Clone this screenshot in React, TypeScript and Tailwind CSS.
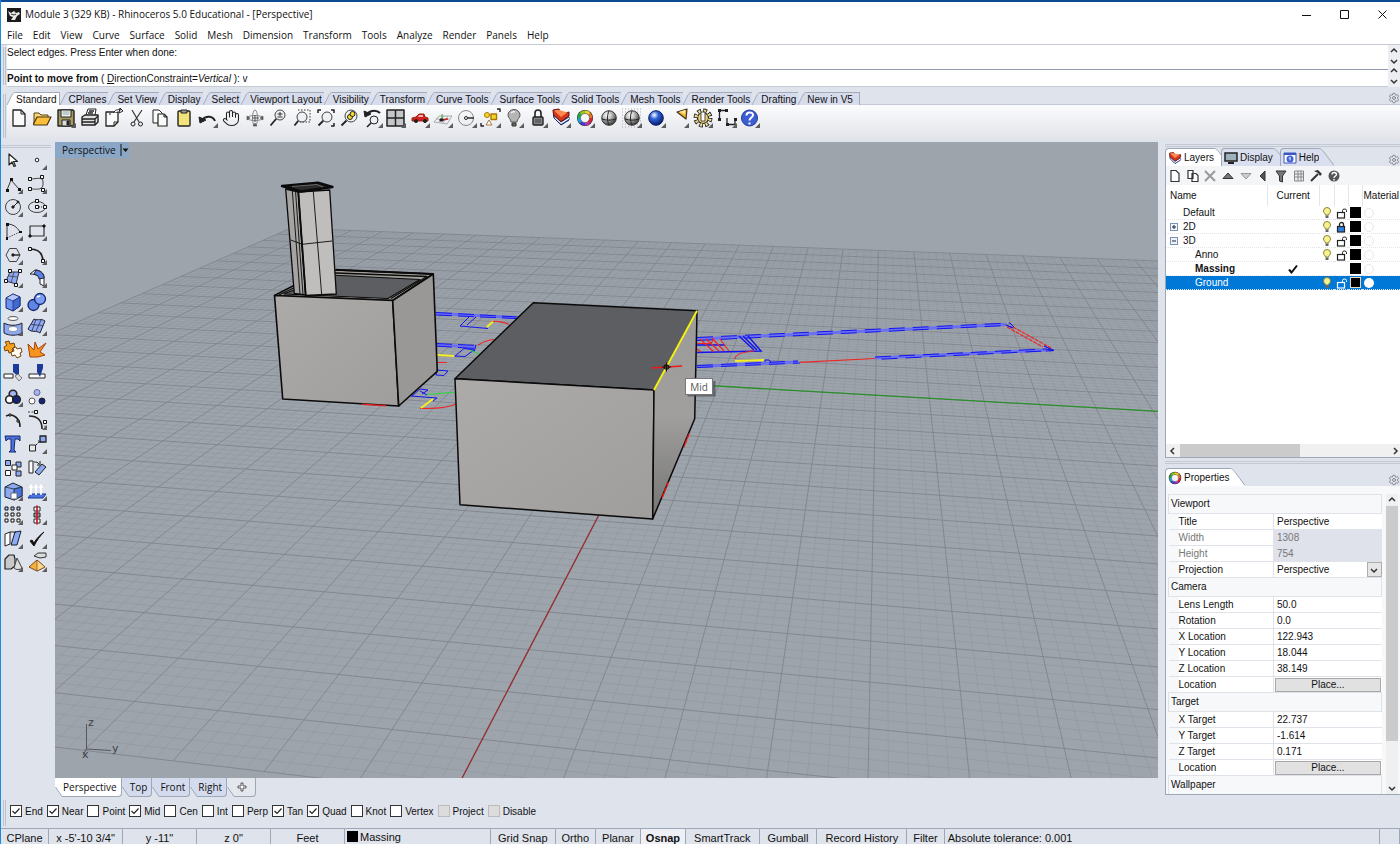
import { useState, type ReactNode } from 'react';
import { Hand, Settings } from 'lucide-react';

/* ---------- camera and construction-plane grid ---------- */

type P2 = [number, number];
const CAM = [122.943, 18.044, 38.149];
const TGT = [22.737, -1.614, 0.171];
const FOCAL = 1325;

function makeProjector() {
  const d = CAM.map((c, i) => TGT[i] - c);
  const len = Math.hypot(d[0], d[1], d[2]);
  const f = d.map((v) => v / len);
  const n = Math.hypot(f[0], f[1]);
  const r = [f[1] / n, -f[0] / n, 0];
  const u = [r[1] * f[2], -r[0] * f[2], r[0] * f[1] - r[1] * f[0]];
  return (x: number, y: number): P2 => {
    const v = [x - CAM[0], y - CAM[1], -CAM[2]];
    const dot = (a: number[]) => a[0] * v[0] + a[1] * v[1] + a[2] * v[2];
    const k = FOCAL / dot(f);
    return [606.5 + dot(r) * k, 460 - dot(u) * k];
  };
}
const project = makeProjector();
const seg = (a: P2, b: P2) =>
  `M${a[0].toFixed(1)} ${a[1].toFixed(1)}L${b[0].toFixed(1)} ${b[1].toFixed(1)}`;

let minorPath = '';
let majorPath = '';
for (let i = -70; i <= 70; i++) {
  const lines = seg(project(i, -70), project(i, 70)) + seg(project(-70, i), project(70, i));
  if (i % 5 === 0) majorPath += lines;
  else minorPath += lines;
}

function Scene() {
  return (
    <svg viewBox="55 142 1103 636" preserveAspectRatio="xMidYMid slice" className="absolute inset-0 h-full w-full" fill="none">
      <defs>
        <linearGradient id="front" x1="0" y1="0" x2="1" y2="1">
          <stop offset="0" stopColor="#acaba9" />
          <stop offset="1" stopColor="#9f9e9c" />
        </linearGradient>
        <linearGradient id="side" x1="0" y1="0" x2="0" y2="1">
          <stop offset="0" stopColor="#9b9b9a" />
          <stop offset="0.5" stopColor="#a09f9e" />
          <stop offset="1" stopColor="#747473" />
        </linearGradient>
      </defs>
      <rect x="55" y="142" width="1103" height="636" fill="#9da4ac" />
      <path d={minorPath} stroke="#8b9199" strokeWidth="1" opacity="0.42" />
      <path d={majorPath} stroke="#80838b" strokeWidth="1" opacity="0.85" />
      <path d={seg(project(0, 0), project(0, 70))} stroke="#2b8f2b" strokeWidth="1.3" />
      <path d={seg(project(0, 0), project(70, 0))} stroke="#962f31" strokeWidth="1.3" />

      {/* floor plan curves */}
      <g stroke="#6a70ee" strokeWidth="3">
        <path d="M697 339L762 336L1006 324.500M697 366.500L798 362M875 358L1047 350" />
        <path d="M436 313.500L516 317.500M436 345L476 347" />
      </g>
      <g stroke="#1414ee" strokeWidth="1">
        <path d="M697 337.500L740 335.500L1010 323L1014 327M697 340.500L1006 325.500M697 365.500L798 361M697 367.500L800 363M875 357L1045 349L1054 350.500L875 359.500M1044 346L1054 350.500M1006 325L1012 328" strokeDasharray="16 8" />
        <path d="M436 312.500L518 317M436 315L516 318.500M436 343.500L478 345.500M436 346L474 348.500" strokeDasharray="16 6" />
        <path d="M1006 325L1014 328M1044 346L1054 350.500L1046 351" />
        <path d="M739 336L754 350M743 336L757 350M748 336L761 351L697 352.500M697 345H725" strokeWidth="1.500" />
        <path d="M765 362v-2h4l2 2M470 316L460 326L488 328.500M476 317L467 325M455 356L464 348.500L474 350L465 356.500zM476 345L474 352M437 370L448 371L444 375.500L436 375zM412 396L420 389L428 390L422 394M411 396L437 398L433 401M420 391L427 395" />
      </g>
      <g stroke="#f02525" strokeWidth="1.200">
        <path d="M800 362.300L875 358.500" />
        <path d="M1007 327L1043 347M1013 327L1051 348" strokeDasharray="4 1" />
        <path d="M697 343.500h14l3-5M700 339l14 13M706 339l13 12M712 338l12 13M720 339l9 12M697 349l4 3M754 351c-12 1-19 3-19 8M491 321.500c6-1 14 1 18 3M478 345c5-3 10-5 16-5.500M437 362.500h10M420 408.500c12 0 27 0 37-5" />
      </g>
      <g stroke="#f4ee22" strokeWidth="2">
        <path d="M735 361L764 360M487 327L493 321.500M437 355L454 356M421 408L433 399" />
      </g>
      <path d="M470 350L479 354M427 394.500L458 392" stroke="#22dd33" />

      {/* small building */}
      <g stroke="#0a0a0a" strokeWidth="1.600" strokeLinejoin="round">
        <path d="M274.500 295.500L322 271L336 270L433.300 274L392.700 300.500z" fill="#a19f9a" />
        <path d="M284 294L330 275L420 279.500L388 298.500z" fill="#5d5e62" strokeWidth="1.200" />
        <path d="M279 295L325 273L336 273L427 276.500L391 298.500" strokeWidth="1.300" />
        <path d="M336 269.700L433.300 274" strokeWidth="2" />
        <path d="M274.500 295.500L392.700 300.500L398.700 406L282.700 399z" fill="url(#front)" />
        <path d="M392.700 300.500L433.300 274L437.300 371.300L398.700 406z" fill="#999897" />
      </g>
      <path d="M362 404.300L386 405.700" stroke="#d22" strokeWidth="1.500" />

      {/* tower */}
      <g stroke="#0a0a0a" strokeLinejoin="round">
        <path d="M285.700 189L298.300 192L305.700 295L294.300 293.500z" fill="#a6a4a3" strokeWidth="1.300" />
        <path d="M298.300 192L329.700 190L336.300 294L305.700 295.500z" fill="#bfbebc" strokeWidth="1.300" />
        <path d="M313.300 191.500L321.700 295M292.300 190.500L300 294.500M295.500 191L303 295" strokeWidth="0.900" />
        <path d="M290.700 240L302.300 244.300L332 241" strokeWidth="0.900" />
        <path d="M298.300 192L305.700 295" strokeWidth="1.800" />
        <path d="M282 186L318 182.700L332.500 187L301 191.500z" fill="#2b2b2d" strokeWidth="2.500" />
        <path d="M292 186.500L317 184.500L323 187" stroke="#777" strokeWidth="0.800" />
      </g>

      {/* large block */}
      <g stroke="#0a0a0a" strokeWidth="1.500" strokeLinejoin="round">
        <path d="M455 378.700L533.300 302.700L697 310.700L654 390z" fill="#5d5e62" />
        <path d="M455 378.700L654 390L652.700 519L460 504.700z" fill="url(#front)" />
        <path d="M654 390L697 310.700L694.700 418.700L652.700 519z" fill="url(#side)" />
      </g>
      <path d="M654 390L697 310.700" stroke="#f7f31a" strokeWidth="2" />
      <path d="M651.700 368L682 366" stroke="#f01818" strokeWidth="1.500" />
      <path d="M689 434L684 447M668.500 482L662 498" stroke="#f01818" strokeWidth="1.500" strokeDasharray="5 1" />
      <circle cx="666.500" cy="367" r="2.200" stroke="#111" strokeWidth="1.200" />
      <path d="M662 367h9M666.500 362.500v9" stroke="#111" />

      {/* snap tooltip */}
      <rect x="687.500" y="381" width="28" height="15.500" fill="#4b4f55" opacity="0.7" />
      <rect x="685.500" y="378.500" width="27" height="16" fill="#fff" stroke="#777" />
      <text x="699" y="390.500" textAnchor="middle" fontSize="10" fill="#575757" className="font-['Open_Sans',sans-serif]">Mid</text>

      {/* world axis icon */}
      <path d="M86.500 724V749L111 750.500M86.500 749L83 755" stroke="#55585d" />
      <g fontSize="11" fill="#3e4146" className="font-['DejaVu_Sans',sans-serif]">
        <text x="88" y="726">z</text>
        <text x="112" y="752">y</text>
        <text x="82" y="758">x</text>
      </g>
    </svg>
  );
}

/* ---------- icons ---------- */

function Icon({ children, more }: { children: ReactNode; more?: boolean }) {
  return (
    <svg viewBox="0 0 24 24" className="h-6 w-6 shrink-0" fill="none" stroke="#222" strokeWidth="1" strokeLinejoin="round">
      {children}
      {more && <path d="M22 17v5h-5z" fill="#5d5d60" stroke="none" />}
    </svg>
  );
}

const Lens = ({ x = 14, y = 9, r = 5 }: { x?: number; y?: number; r?: number }) => (
  <>
    <circle cx={x} cy={y} r={r} fill="#eef0f3" stroke="#444" />
    <path d={`M${x - r * 0.75} ${y + r * 0.75}L4.500 19.500`} stroke="#222" strokeWidth="1.800" />
  </>
);

function Wheel({ cx = 12, cy = 12, r = 6 }: { cx?: number; cy?: number; r?: number }) {
  const colors = ['#f0d020', '#e87020', '#dd2030', '#c030b0', '#4040d8', '#20a0d8', '#20b040', '#90cc20'];
  return (
    <>
      <circle cx={cx} cy={cy} r={r + 2} fill="#222" stroke="none" />
      {colors.map((c, i) => {
        const a = (i * Math.PI) / 4 - Math.PI / 2;
        const b = a + Math.PI / 4 + 0.05;
        return (
          <path
            key={c}
            d={`M${cx + r * Math.cos(a)} ${cy + r * Math.sin(a)}A${r} ${r} 0 0 1 ${cx + r * Math.cos(b)} ${cy + r * Math.sin(b)}`}
            stroke={c}
            strokeWidth="3"
          />
        );
      })}
      <circle cx={cx} cy={cy} r={r - 1.5} fill="#f6f6f8" stroke="#555" strokeWidth="0.500" />
    </>
  );
}

const LayerGlyph = () => (
  <>
    <path d="M5 12L12 19L20 14V11L12 16L4.500 9z" fill="#2a48b0" stroke="#122560" />
    <path d="M5 10L12 16.500L20 11.500V13L12 18L6 12.500z" fill="#fff" stroke="none" />
    <path d="M4 4L10 3L12 8L20 6V10L12 15.500L4.500 9z" fill="#d8361a" stroke="#5a120c" />
    <path d="M5 4.500L9.500 3.800L18.500 6.500L12 11z" fill="#fb8a52" stroke="none" />
  </>
);

const Ball = ({ id, light, dark }: { id: string; light: string; dark: string }) => (
  <>
    <defs>
      <radialGradient id={id} cx="0.38" cy="0.3" r="0.7">
        <stop offset="0" stopColor="#fff" />
        <stop offset="0.4" stopColor={light} />
        <stop offset="1" stopColor={dark} />
      </radialGradient>
    </defs>
    <circle cx="12" cy="12" r="7.300" fill={`url(#${id})`} stroke={dark} />
  </>
);

const PAGE = 'M6 4h8l4 4v12H6z';

const toolbar: { name: string; more?: boolean; art: ReactNode }[] = [
  { name: 'New', art: <><path d={PAGE} fill="#fafafa" strokeWidth="1.300" /><path d="M14 4v4h4" /></> },
  { name: 'Open', art: <><path d="M4 18V7h5l2 2h7v3" fill="#f5d67a" stroke="#5a4010" /><path d="M3.500 18L7 11h14l-4 8H4z" fill="#fbbf3c" stroke="#4a350c" strokeWidth="1.200" /></> },
  { name: 'Save', more: true, art: <><path d="M4 4h15l1 1v15H4z" fill="#a39a5c" strokeWidth="1.400" /><path d="M7 4h10v7H7z" fill="#f1f1f1" /><path d="M8 14h8v6H8z" fill="#ddd" /><path d="M13 15h2v4h-2z" fill="#222" /><path d="M8.500 6h7M8.500 8h7" stroke="#8aa" /></> },
  { name: 'Print', art: <><path d="M8 9l2-6h8l-1 6" fill="#fff" /><path d="M4 11l3-2h13v7l-3 3H4z" fill="#e2e2e2" strokeWidth="1.400" /><path d="M4 13h13l3-3M4 16h13M17 13v6M11 5h5M10 7h5" strokeWidth="1.300" /></> },
  { name: 'Document properties', art: <><path d="M5 6h12v10l-4 4H5z" fill="#fafafa" strokeWidth="1.300" /><path d="M13 20v-4h4M8 8h2" /><path d="M13 7c0-3 4-4 7-3M19 2l3 3l-4 2z" fill="#fff" /></> },
  { name: 'Cut', art: <><path d="M7 4l7 12M17 4L9 16" stroke="#333" strokeWidth="1.200" /><circle cx="8" cy="18" r="2" /><circle cx="15.500" cy="18" r="2" /></> },
  { name: 'Copy', art: <><path d="M5 4h6l3 3v10H5z" fill="#fafafa" /><path d="M10 8h6l3 3v9h-9z" fill="#fafafa" strokeWidth="1.200" /><path d="M16 8v3h3" /></> },
  { name: 'Paste', art: <><rect x="6" y="5" width="12" height="15" rx="1" fill="#f3e37b" strokeWidth="1.400" /><path d="M9 4h6v3H9z" fill="#999" /></> },
  { name: 'Undo', more: true, art: <><path d="M6 14c4-5 11-4 13 1" stroke="#222" strokeWidth="2" /><path d="M3 11l1 6l6-3z" fill="#222" /></> },
  { name: 'Pan', art: <Hand x="3" y="3" size={18} strokeWidth={1.4} stroke="#222" /> },
  { name: 'Rotate view', art: <><ellipse cx="12" cy="12" rx="8" ry="2.500" stroke="#888" /><ellipse cx="12" cy="12" rx="2.500" ry="8" stroke="#888" /><path d="M12 9v7M9 12h7" stroke="#555" /><path d="M10 20l2-3l2 3zM4 10l3 2l-3 2zM20 10l-3 2l3 2z" fill="#666" stroke="#444" strokeWidth="0.500" /></> },
  { name: 'Zoom dynamic', art: <><Lens /><path d="M11.500 8h5M14 6v4M11.500 11h5" stroke="#333" /></> },
  { name: 'Zoom window', art: <><path d="M8 4h12v12H10" stroke="#333" strokeDasharray="1.500 1.500" /><Lens x={12} y={11} /></> },
  { name: 'Zoom extents', art: <><Lens x={13} y={11} /><path d="M4 7V4h3M17 4h3v3M20 17v3h-3" strokeWidth="1.500" /></> },
  { name: 'Zoom selected', art: <><Lens r={6} y={10} /><circle cx="13" cy="11" r="2.500" fill="#f4dd26" /><circle cx="15.500" cy="8" r="2.500" fill="#f4dd26" /></> },
  { name: 'Undo view', more: true, art: <><circle cx="13" cy="14" r="4" fill="#eef0f3" /><path d="M10 17l-4 4" strokeWidth="1.600" /><path d="M7 7c4-3 9-3 12 0" strokeWidth="2.200" /><path d="M3 5l1 6l6-3z" fill="#222" /></> },
  { name: 'Four viewports', more: true, art: <><rect x="3" y="4" width="17" height="16" fill="#c4c6c8" strokeWidth="1.500" /><path d="M11.500 4v16M3 12h17" strokeWidth="1.500" /></> },
  { name: 'Named view', more: true, art: <><path d="M4 12l4-1l3-3h5l1 3l3 1v3H4z" fill="#d41f1f" stroke="#921" /><circle cx="8" cy="15" r="1.600" fill="#222" /><circle cx="17" cy="15" r="1.600" fill="#222" /><path d="M11 9h4v2h-5z" fill="#f3b0b0" stroke="none" /></> },
  { name: 'Set CPlane', more: true, art: <><path d="M3 16l5-6h13l-5 8zM8 16l5-6M12 17l5-7M5 13h13" stroke="#999" strokeWidth="0.800" /><path d="M11 14V8" stroke="#2a2" /><path d="M11 14l6-1" stroke="#c22" strokeWidth="1.500" /><path d="M9 13h3v2H9z" fill="#222" /></> },
  { name: 'Object snap', more: true, art: <><circle cx="11" cy="12" r="7.500" stroke="#888" /><path d="M11 12h8" strokeWidth="1.400" /><circle cx="11" cy="12" r="1.500" fill="#fff" /></> },
  { name: 'Select', more: true, art: <><circle cx="8" cy="9" r="2.500" fill="#f6d62a" stroke="#a70" /><rect x="12" y="8" width="5.500" height="5.500" fill="#f6d62a" stroke="#a70" strokeWidth="1.400" /><path d="M10 14l3 5H7z" fill="#fff" stroke="#a74" /><path d="M18 3h3v3M5 20H2v-3" strokeWidth="1.400" /></> },
  { name: 'Hide', more: true, art: <><path d="M9 16c0-3-3-4-3-7a6 5.500 0 0 1 12 0c0 3-3 4-3 7z" fill="#b5b5b5" stroke="#555" /><path d="M10 17h4v3h-4z" fill="#666" stroke="#333" /><path d="M9 7c1-1 2-2 4-1" stroke="#eee" strokeWidth="1.500" /></> },
  { name: 'Lock', more: true, art: <><path d="M9 11V7a3 3 0 0 1 6 0v4" strokeWidth="1.600" /><rect x="7" y="11" width="10" height="8" rx="1" fill="#888" strokeWidth="1.400" /><path d="M9 14h6M9 16h6" stroke="#444" /></> },
  { name: 'Layers', more: true, art: <LayerGlyph /> },
  { name: 'Object properties', more: true, art: <Wheel /> },
  { name: 'Shade', art: <><Ball id="b1" light="#c4c4c4" dark="#3a3a3a" /><path d="M5 13c4 1.500 10 1.500 14 0M12 5c-2 4-2 10 0 14" /></> },
  { name: 'Shade selected', more: true, art: <><path d="M2 3h20M2 6h20M2 9h20M2 12h20M2 15h20M2 18h20M2 21h20" stroke="#aaa" strokeDasharray="1 2" /><Ball id="b2" light="#c4c4c4" dark="#3a3a3a" /><path d="M5 13c4 1.500 10 1.500 14 0M12 5c-2 4-2 10 0 14" /></> },
  { name: 'Render', more: true, art: <Ball id="b3" light="#2d63d8" dark="#0b1d6a" /> },
  { name: 'Spotlight', more: true, art: <><path d="M10 6l10-3l-1 10z" fill="#f6b82c" stroke="#432" strokeWidth="1.200" /><path d="M12 6l6-2v4z" fill="#fde59a" stroke="none" /></> },
  { name: 'Options', more: true, art: <><circle cx="12" cy="12" r="7" stroke="#222" strokeWidth="5" strokeDasharray="3.500 2" /><circle cx="12" cy="12" r="5.500" fill="#ecd27a" stroke="#222" strokeWidth="1.200" /><circle cx="12" cy="12" r="7" stroke="#f0dc90" strokeWidth="3.200" strokeDasharray="2 3.500" strokeDashoffset="-0.750" /><path d="M10 6h4v9h-4z" fill="#fff" strokeWidth="0.800" /></> },
  { name: 'Dimension', more: true, art: <><path d="M4.500 5v9M4 4.500h7M12 18.500h8M20 13v6M12 12v7" strokeWidth="1.300" /><path d="M3 3h3v3H3zM10 3h3v3h-3zM3 12h3v3H3zM19 12h3v3h-3zM11 17h3v3h-3z" fill="#222" stroke="none" /></> },
  { name: 'Help', more: true, art: <><circle cx="11.500" cy="12" r="8" fill="#3c5ed2" stroke="#243a9c" /><path d="M8.500 9.500c0-4 6.500-4 6.500-.5c0 2.500-3.500 2.500-3.500 5.500M11.500 16.500v2" stroke="#fff" strokeWidth="2" /></> },
];

const Sq = ({ x, y, s = 3, fill = '#fff' }: { x: number; y: number; s?: number; fill?: string }) => (
  <rect x={x - s / 2} y={y - s / 2} width={s} height={s} fill={fill} stroke="#111" />
);
const BLUE = '#8ea8f2';

const sideTools: { name: string; more?: boolean; art: ReactNode }[] = [
  { name: 'Cancel', art: <path d="M8 6v11l3-3l2 4.500l1.500-.5l-2-4.500h4z" fill="#fff" strokeWidth="1.200" /> },
  { name: 'Point', more: true, art: <circle cx="12" cy="12" r="1.800" fill="#fff" /> },
  { name: 'Polyline', more: true, art: <><path d="M6 18L10 8L18 17" stroke="#333" /><path d="M5 17h3v3H5zM9 6h3v3H9zM17 16h3v3h-3z" fill="#111" stroke="none" /></> },
  { name: 'Curve', more: true, art: <><path d="M5 7C12 7 18 4 18 10C19 19 12 17 6 17" stroke="#444" /><Sq x={5} y={7} /><Sq x={17} y={5} /><Sq x={5} y={17} /><Sq x={18} y={18} /></> },
  { name: 'Circle', more: true, art: <><circle cx="12" cy="12" r="7.500" stroke="#444" /><path d="M12 12l5-5" /><circle cx="12" cy="12" r="1.200" fill="#111" /><circle cx="17" cy="7" r="1" fill="#111" /></> },
  { name: 'Ellipse', more: true, art: <><ellipse cx="12" cy="12" rx="8.500" ry="5.500" stroke="#444" /><path d="M12 12h8" strokeDasharray="1 1" /><Sq x={12} y={12} /><Sq x={12} y={6} /><Sq x={20} y={12} /></> },
  { name: 'Arc', more: true, art: <><path d="M6 5v14M6 5c6 0 10 3 13 8" stroke="#333" /><path d="M6 19l13-6" strokeDasharray="1.500 1" stroke="#555" /><path d="M5 4h3v3H5zM5 18h2v3H5zM18 12h3v2h-3z" fill="#111" stroke="none" /></> },
  { name: 'Rectangle', more: true, art: <><rect x="5" y="7" width="14" height="10" stroke="#333" strokeWidth="1.200" /><Sq x={5} y={17} s={2} fill="#111" /><Sq x={19} y={7} s={2} fill="#111" /></> },
  { name: 'Polygon', more: true, art: <><path d="M8.500 5.500h7L19 12l-3.500 6.500h-7L5 12z" stroke="#444" /><path d="M12 12h7" strokeWidth="1.400" /><circle cx="12" cy="12" r="1.200" fill="#111" /></> },
  { name: 'Fillet', more: true, art: <><path d="M5 6C14 6 18 10 18 19" strokeWidth="1.600" /><Sq x={5} y={6} /><Sq x={18} y={18} /></> },
  { name: 'Surface from points', more: true, art: <><path d="M9 6h9L15 18L5 15z" fill={BLUE} stroke="#334" /><path d="M8 10l8 1M13 6l-3 11" stroke="#334" strokeWidth="0.700" /><Sq x={9} y={5} /><Sq x={19} y={5} /><Sq x={5} y={15} /><Sq x={15} y={19} /></> },
  { name: 'Surface', more: true, art: <><path d="M5 8l5-4c5 0 9 3 9 7v9l-4-2v-4c0-4-4-6-10-6z" fill="#fff" /><path d="M11 4c5 1 8 4 8 8l-5 1c0-3-2-4-5-5z" fill="#5b82e8" stroke="#223" /></> },
  { name: 'Box', more: true, art: <><path d="M5 8l7-4l7 3v9l-7 5l-7-3z" fill="#6c90ee" stroke="#13266e" /><path d="M5 8l7-4l7 3l-7 4z" fill="#b4c7fb" stroke="#13266e" strokeWidth="0.700" /><path d="M12 11v10l7-5V7z" fill="#4169cf" stroke="#13266e" strokeWidth="0.700" /></> },
  { name: 'Boolean', more: true, art: <><circle cx="8.500" cy="15" r="5.500" fill="#5f86e6" stroke="#13266e" strokeWidth="1.300" /><circle cx="15" cy="9" r="5.500" fill="#7da0f2" stroke="#13266e" strokeWidth="1.300" /><path d="M12 7l3-1" stroke="#fff" strokeWidth="1.500" /></> },
  { name: 'Extrude', more: true, art: <><ellipse cx="12" cy="4.500" rx="5" ry="2" fill="#fff" stroke="#555" /><path d="M3 9c5 3 13 3 18 0v10c-5 3-13 3-18 0z" fill={BLUE} stroke="#223" /><ellipse cx="12" cy="15" rx="4.500" ry="2.500" fill="#fff" stroke="#89a" /></> },
  { name: 'Patch', more: true, art: <><path d="M3 15L9 5c4 2 7-1 11 2l-5 12c-4-3-8 0-12-4z" fill={BLUE} stroke="#223" /><path d="M6 10c4 2 8 0 12 2M11 5l-4 12M16 6l-5 11" stroke="#223" strokeWidth="0.700" /></> },
  { name: 'Join', art: <><path d="M4 5l4-1l1 3l4-1l1 4l-3 2l1 3l-4 1l-1-3l-3 1l-1-4l3-2z" fill="#f5a01e" stroke="#741" /><path d="M12 11l3-1l1 2l4-1l1 4l-2 1l1 3l-4 2l-2-3l-3 1l-1-4l3-1z" fill="#fffdf0" stroke="#741" /></> },
  { name: 'Explode', art: <path d="M3 7l6 6l1-8l3 7l8-6l-6 9l5 3l-7 2H5z" fill="#f7941d" stroke="#a4400a" /> },
  { name: 'Trim', art: <><path d="M12 3h6v13l-6-5z" fill="#1b3a9a" stroke="none" /><path d="M3 13h9v4H3z" fill="#fff" /><path d="M14 15l4 5l3-3l-4-4z" fill="#ddd" stroke="#777" /></> },
  { name: 'Split', art: <><path d="M4 13h16v4H4z" fill="#fff" /><path d="M12 3h6v4l-3 9l-3-5z" fill="#1b3a9a" stroke="none" /></> },
  { name: 'Group', more: true, art: <><circle cx="12" cy="9" r="3.800" fill="#a5b4f2" strokeWidth="1.600" /><circle cx="8.500" cy="14.500" r="3.800" fill="#fff" strokeWidth="1.600" /><circle cx="15.500" cy="14.500" r="3.800" fill="#16247c" strokeWidth="1.600" /></> },
  { name: 'Ungroup', art: <><circle cx="12" cy="7.500" r="3" fill="#a5b4f2" stroke="#668" /><circle cx="7" cy="16" r="3" fill="#fff" stroke="#555" /><circle cx="17" cy="16" r="3" fill="#16247c" /></> },
  { name: 'Edit points', art: <><path d="M5 8C12 5 19 10 19 19" strokeWidth="1.600" /><Sq x={9} y={7} s={2} /><Sq x={17} y={13} s={2} /></> },
  { name: 'Control points', more: true, art: <><path d="M4 8C13 8 17 13 17 21" strokeWidth="1.600" /><path d="M3 4h8M20 14v7" strokeDasharray="2 1.500" stroke="#444" /><Sq x={11} y={4} /><Sq x={20} y={14} /></> },
  { name: 'Text', art: <path d="M4 4h15v5l-2-2h-3l-1 11l2 2H8l2-2V7H7L5 9z" fill="#4a73de" stroke="#13266e" /> },
  { name: 'Move', more: true, art: <><rect x="4.500" y="13" width="6" height="6" fill="#e8e8e8" /><rect x="15" y="4" width="6" height="6" fill={BLUE} strokeWidth="1.300" /><path d="M11 13l4-4M15 11v-2h-2" strokeDasharray="2 1" /></> },
  { name: 'Copy objects', art: <><rect x="4.500" y="4.500" width="5" height="5" fill={BLUE} /><rect x="15" y="6" width="5" height="5" fill={BLUE} /><rect x="11" y="9" width="5" height="5" fill="#fff" /><rect x="4.500" y="14.500" width="5" height="5" fill="#fff" /><rect x="15" y="15" width="5" height="5" fill={BLUE} /></> },
  { name: 'Rotate', art: <><path d="M4 5h4v12H4z" fill="#fff" /><path d="M10 16l7-8l4 3l-7 8z" fill={BLUE} /><path d="M9 6c2 0 4 0 5 2M15 5v4h-3" /></> },
  { name: 'Scale', more: true, art: <><path d="M4 8l8-4l9 4v9l-8 4l-9-3z" fill={BLUE} stroke="#123" /><path d="M13 10v11l8-4V8z" fill="#4a73de" stroke="#234" /><path d="M4 8l9 2l8-2" stroke="#345" /><path d="M10 14h6v6h-6z" fill="#fff" stroke="#667" /></> },
  { name: 'Extrude up', more: true, art: <><path d="M3 19l3-4h15l-3 4z" fill="#4a73de" stroke="#123a9a" /><path d="M6 16V7M11 16V7M16 16V7M4.500 9L6 6l1.500 3M9.500 9L11 6l1.500 3M14.500 9L16 6l1.500 3" stroke="#fff" strokeWidth="1.600" /></> },
  { name: 'Array', more: true, art: <>{[5.5, 11.5, 17.5].map((x) => [5.5, 11.5, 17.5].map((y) => <Sq key={`${x}-${y}`} x={x} y={y} s={3} fill={y < 6 ? '#b9c9ff' : '#fff'} />))}</> },
  { name: 'Align', more: true, art: <><rect x="9" y="4" width="6" height="4" fill="#fff" /><rect x="9" y="10" width="6" height="4" fill="#999" /><rect x="9" y="16" width="6" height="4" fill="#fff" /><path d="M12 2.500v19" stroke="#c41a2a" strokeWidth="1.700" /></> },
  { name: 'Shear', more: true, art: <><path d="M4 7l5-2v12l-5 2z" fill="#fff" /><path d="M10 18l4-13l6-1l-4 14z" fill={BLUE} stroke="#123" /><path d="M9 5h6" /></> },
  { name: 'Check', more: true, art: <path d="M5 14l4 5C12 13 15 9 19 5C15 8 11 12 9 16L7 13z" fill="#111" stroke="#111" /> },
  { name: 'Mesh tools', more: true, art: <><path d="M4 9l4-4h5l1 4v7l-4 3H4z" fill="#c9c9c9" strokeWidth="1.200" /><path d="M16 8l5 10c-2 2-6 2-8 0z" fill="#ddd" stroke="#444" /></> },
  { name: 'Render tools', more: true, art: <><path d="M4 17l8-7l8 7l-8 4z" fill="#f7b23a" stroke="#742" /><path d="M12 10l8 7l-8 4z" fill="#fbd98a" stroke="#742" strokeWidth="0.700" /><path d="M9 6l4-3h8v4l-6 1z" fill="#ddd" stroke="#333" /></> },
];

/* ---------- data ---------- */

const menus = ['File', 'Edit', 'View', 'Curve', 'Surface', 'Solid', 'Mesh', 'Dimension', 'Transform', 'Tools', 'Analyze', 'Render', 'Panels', 'Help'];
const toolTabs = ['Standard', 'CPlanes', 'Set View', 'Display', 'Select', 'Viewport Layout', 'Visibility', 'Transform', 'Curve Tools', 'Surface Tools', 'Solid Tools', 'Mesh Tools', 'Render Tools', 'Drafting', 'New in V5'];
const viewTabs = ['Perspective', 'Top', 'Front', 'Right'];
const snaps: [string, boolean, boolean?][] = [
  ['End', true], ['Near', true], ['Point', false], ['Mid', true], ['Cen', false], ['Int', false], ['Perp', false],
  ['Tan', true], ['Quad', true], ['Knot', false], ['Vertex', false], ['Project', false, true], ['Disable', false, true],
];

type Layer = { name: string; pad: string; box?: '+' | '-'; lock?: boolean; current?: boolean; selected?: boolean };
const layers: Layer[] = [
  { name: 'Default', pad: 'pl-[17px]' },
  { name: '2D', pad: 'pl-1', box: '+', lock: true },
  { name: '3D', pad: 'pl-1', box: '-' },
  { name: 'Anno', pad: 'pl-[29px]' },
  { name: 'Massing', pad: 'pl-[29px]', current: true },
  { name: 'Ground', pad: 'pl-[29px]', selected: true },
];

type Prop = { label: string; value?: string; kind?: 'readonly' | 'select' | 'button' };
const groups: { title: string; rows: Prop[] }[] = [
  { title: 'Viewport', rows: [{ label: 'Title', value: 'Perspective' }, { label: 'Width', value: '1308', kind: 'readonly' }, { label: 'Height', value: '754', kind: 'readonly' }, { label: 'Projection', value: 'Perspective', kind: 'select' }] },
  { title: 'Camera', rows: [{ label: 'Lens Length', value: '50.0' }, { label: 'Rotation', value: '0.0' }, { label: 'X Location', value: '122.943' }, { label: 'Y Location', value: '18.044' }, { label: 'Z Location', value: '38.149' }, { label: 'Location', kind: 'button' }] },
  { title: 'Target', rows: [{ label: 'X Target', value: '22.737' }, { label: 'Y Target', value: '-1.614' }, { label: 'Z Target', value: '0.171' }, { label: 'Location', kind: 'button' }] },
  { title: 'Wallpaper', rows: [] },
];

/* ---------- small parts ---------- */

const Chevron = ({ d }: { d: 'up' | 'down' | 'left' | 'right' }) => {
  const path = { up: 'M2 6l3-3l3 3', down: 'M2 4l3 3l3-3', left: 'M6 2L3 5l3 3', right: 'M4 2l3 3l-3 3' }[d];
  return (
    <svg viewBox="0 0 10 10" className="h-[10px] w-[10px]" fill="none" stroke="#333" strokeWidth="1.500">
      <path d={path} />
    </svg>
  );
};

const Gear = () => (
  <button aria-label="Panel options" className="block shrink-0">
    <Settings className="block h-3 w-3 text-[#7d8085]" strokeWidth={1.8} />
  </button>
);

const Grip = () => <div className="h-[3px] border-y border-[#c3c8d2]" />;
const VGrip = () => <div className="my-[2px] mr-px ml-[2px] w-[3px] shrink-0 border-x border-[#bcc1cc]" />;

function PanelTab({ active, icon, children }: { active?: boolean; icon: ReactNode; children: ReactNode }) {
  const fill = active ? '#ffffff' : '#d9dfee';
  return (
    <button className="flex h-[18px]">
      <span className={`flex h-full items-center gap-[2px] rounded-tl-sm border-t border-l border-[#9ea7b5] pl-[2px] ${active ? 'bg-white' : 'bg-[#d9dfee]'}`}>
        {icon}
        {children}
      </span>
      <svg viewBox="0 0 15 18" className="h-[18px] w-[15px]" fill="none">
        <path d="M0 0.500C4 0.500 4 3 15 18H0z" fill={fill} />
        <path d="M0 0.500C3 0.500 4 3 15 17.500" stroke="#9ea7b5" />
      </svg>
    </button>
  );
}

const Bulb = () => (
  <svg viewBox="0 0 10 12" className="h-3 w-[10px]">
    <path d="M3.500 8C3.500 6.500 1.500 6 1.500 4a3.500 3.500 0 0 1 7 0c0 2-2 2.500-2 4z" fill="#f8f295" stroke="#8a8430" />
    <path d="M3.500 8.500h3v2.500h-3z" fill="#666" />
  </svg>
);
const Padlock = ({ locked, light }: { locked?: boolean; light?: boolean }) => (
  <svg viewBox="0 0 11 12" className="h-3 w-[11px]" fill="none" stroke={light ? '#fff' : '#222'}>
    {locked ? <path d="M3.500 6V3.500a2 2 0 0 1 4 0V6" strokeWidth="1.300" /> : <path d="M6.500 6V3.500a2 1.500 0 0 1 4 0V5" />}
    <rect x="1.500" y="5.500" width="7" height="5.500" fill={locked ? '#2e7fe0' : light ? '#0078d7' : '#fff'} strokeWidth="1.200" />
  </svg>
);

function LayerTools() {
  const k = '#333';
  const items: [string, ReactNode][] = [
    ['New layer', <path key="a" d="M4 2.500h5l3 3v8H4z" fill="#fff" stroke={k} strokeWidth="1.200" />],
    ['New sublayer', <path key="a" d="M3 2.500h5v8H3zM7 5.500h4l2 2v6H7z" fill="#fff" stroke={k} strokeWidth="1.200" />],
    ['Delete', <path key="a" d="M3 3l10 10M13 3L3 13" stroke="#999" strokeWidth="2" />],
    ['Up', <path key="a" d="M8 5l5 5.500H3z" fill="#777" stroke={k} />],
    ['Down', <path key="a" d="M8 11l5-5.500H3z" fill="#ccc" stroke="#999" />],
    ['Left', <path key="a" d="M5 8l5-5v10z" fill="#555" stroke={k} />],
    ['Filter', <path key="a" d="M3 3h10L9.500 8v6l-3-1V8z" fill="#777" stroke={k} />],
    ['Columns', <path key="a" d="M3.500 3h9v10h-9zM3.500 6h9M3.500 9h9M7 3v10M10 3v10" fill="#eee" stroke="#888" />],
    ['Tools', <><path d="M3 13l7-7" stroke={k} strokeWidth="2" /><path d="M6 3l4-1l4 4l-2 2l-2-3z" fill={k} /></>],
    ['Help', <><circle cx="8" cy="8" r="5.500" fill="#555" /><path d="M6 6.500c0-3 4.500-2.500 4.500 0C10.500 8 8 8 8 10M8 11v1.500" stroke="#fff" strokeWidth="1.400" /></>],
  ];
  return (
    <div className="flex h-[19px] w-[177px] items-center bg-[#f4f5f7]">
      {items.map(([n, a]) => (
        <button key={n} aria-label={n} className="grid min-w-0 flex-1 place-items-center">
          <svg viewBox="0 0 16 16" className="h-4 w-4" fill="none">{a}</svg>
        </button>
      ))}
    </div>
  );
}

function LayersPanel() {
  return (
    <section className="flex h-[310px] flex-col">
      <div className="flex items-end">
        <PanelTab active icon={<svg viewBox="2 1 20 20" className="h-[14px] w-[14px]"><LayerGlyph /></svg>}>Layers</PanelTab>
        <div className="-ml-2 flex">
          <PanelTab icon={<svg viewBox="0 0 14 14" className="h-[14px] w-[14px]"><path d="M1 2h12v8H1z" fill="#9fb0bd" stroke="#222" strokeWidth="1.500" /><path d="M4 12h6" stroke="#222" strokeWidth="2" /></svg>}>Display</PanelTab>
        </div>
        <div className="-ml-2 flex">
          <PanelTab icon={<svg viewBox="0 0 14 14" className="h-[14px] w-[14px]" fill="none"><path d="M1 2h12v10H1z" fill="#fff" stroke="#3a57c0" /><path d="M1 3h12" stroke="#3a57c0" strokeWidth="2" /><circle cx="7" cy="8" r="3.500" fill="#3d62d8" /><path d="M6 7.500c0-2 2.500-1 1 .5v1.500" stroke="#fff" /></svg>}>Help</PanelTab>
        </div>
        <div className="ml-auto"><Gear /></div>
      </div>
      <div className="flex min-h-0 flex-1 flex-col border-b border-l border-[#9ea7b5] bg-white">
        <div className="bg-[#f4f5f7]"><LayerTools /></div>
        <div className="flex-1 overflow-hidden">
          <table className="w-full table-fixed border-collapse text-left">
            <colgroup>
              <col />
              <col className="w-[52px]" />
              <col className="w-[15px]" />
              <col className="w-[14px]" />
              <col className="w-[14px]" />
              <col className="w-[38px]" />
            </colgroup>
            <thead>
              <tr className="h-[21px] [&>th]:border-r [&>th]:border-[#e3e5e9] [&>th]:p-0 [&>th]:font-normal [&>th]:whitespace-nowrap [&>th:last-child]:border-r-0">
                <th><span className="pl-1">Name</span></th>
                <th><span className="pl-[9px]">Current</span></th>
                <th></th>
                <th></th>
                <th></th>
                <th><span className="pl-px">Material</span></th>
              </tr>
            </thead>
            <tbody>
              {layers.map((l) => (
                <tr key={l.name} className={`border-b border-dotted border-[#e3e5e9] leading-3 [&>td]:p-0 ${l.selected ? 'bg-[#0078d7] text-white' : 'text-[#111]'} ${l.current ? 'font-bold' : ''}`}>
                  <td>
                    <div className={`flex h-[13px] items-center gap-[5px] ${l.pad}`}>
                      {l.box && (
                        <svg viewBox="0 0 8 8" className="h-2 w-2" fill="none">
                          <rect x="0.500" y="0.500" width="7" height="7" fill="#eef3fa" stroke="#7b93b5" />
                          <path d={l.box === '+' ? 'M2 4h4M4 2v4' : 'M2 4h4'} stroke="#223" />
                        </svg>
                      )}
                      {l.name}
                    </div>
                  </td>
                  <td>
                    {l.current && (
                      <svg viewBox="0 0 10 10" className="mx-auto h-[10px] w-[10px]" fill="none"><path d="M1 5.500l2.500 3L9 1.500" stroke="#111" strokeWidth="2" /></svg>
                    )}
                  </td>
                  <td><div className="flex justify-center">{!l.current && <Bulb />}</div></td>
                  <td><div className="flex justify-center">{!l.current && <Padlock locked={l.lock} light={l.selected} />}</div></td>
                  <td><div className={`mx-auto h-[11px] w-[11px] bg-black ${l.selected ? 'border border-[#e8d9b8]' : ''}`} /></td>
                  <td><div className={`ml-[2px] h-[10px] w-[10px] rounded-full bg-white ${l.selected ? '' : 'border border-[#e6e8eb]'}`} /></td>
                </tr>
              ))}
            </tbody>
          </table>
        </div>
        <div className="flex h-[13px] items-center justify-between bg-[#f0f0f0]">
          <button aria-label="Scroll left" className="px-[2px]"><Chevron d="left" /></button>
          <div className="h-full flex-1"><div className="h-full w-[57%] bg-[#cbcbcb]" /></div>
          <button aria-label="Scroll right"><Chevron d="right" /></button>
        </div>
      </div>
    </section>
  );
}

function PropertiesPanel() {
  return (
    <section className="flex h-[327px] flex-col">
      <div className="flex items-end">
        <PanelTab active icon={<svg viewBox="3 3 18 18" className="h-[14px] w-[14px]" fill="none"><Wheel /></svg>}>Properties</PanelTab>
        <div className="ml-auto"><Gear /></div>
      </div>
      <div className="flex min-h-0 flex-1 gap-1 border-b border-l border-[#9ea7b5] bg-[#f7f8fa] pt-2 pl-[2px]">
        <div className="flex-1 overflow-hidden">
          <table className="w-full table-fixed border-collapse text-left leading-3">
            <colgroup>
              <col className="w-[10px]" />
              <col />
              <col className="w-[108px]" />
            </colgroup>
            {groups.map((g) => (
              <tbody key={g.title}>
                <tr className="h-[19px]">
                  <th colSpan={3} className="border border-[#dfe2e9] p-0 pl-[2px] font-normal">{g.title}</th>
                </tr>
                {g.rows.map((r, i) => {
                  const id = `${g.title}-${i}`;
                  return (
                    <tr key={id} className={`h-[16px] [&>td]:border-b [&>td]:border-[#dfe2e9] [&>td]:p-0 ${r.kind === 'readonly' ? 'text-[#777]' : 'text-[#111]'}`}>
                      <td></td>
                      <td className="bg-white"><label htmlFor={id}>{r.label}</label></td>
                      <td className={`border-l ${r.kind === 'readonly' ? 'bg-[#dfe2ea]' : 'bg-white'}`}>
                        {r.kind === 'button' ? (
                          <button id={id} className="ml-px block h-[14px] w-[106px] border border-[#a8a8a8] bg-[#e1e1e1] leading-3">Place...</button>
                        ) : r.kind === 'select' ? (
                          <div className="grid">
                            <select id={id} defaultValue={r.value} className="col-start-1 row-start-1 h-[15px] appearance-none bg-transparent pl-[3px] leading-3">
                              <option>Perspective</option>
                              <option>Parallel</option>
                            </select>
                            <span className="pointer-events-none col-start-1 row-start-1 grid h-[15px] w-[15px] place-items-center justify-self-end border border-[#adadad] bg-[#e6e6e6]"><Chevron d="down" /></span>
                          </div>
                        ) : (
                          <input id={id} defaultValue={r.value} readOnly={r.kind === 'readonly'} className="block h-[15px] w-full bg-transparent pl-[3px] outline-none" />
                        )}
                      </td>
                    </tr>
                  );
                })}
              </tbody>
            ))}
          </table>
        </div>
        <div className="mr-[2px] flex w-3 flex-col items-center justify-between bg-[#f0f0f0]">
          <button aria-label="Scroll up" className="py-px"><Chevron d="up" /></button>
          <div className="w-full flex-1"><div className="h-[85%] w-full bg-[#cbcbcb]" /></div>
          <button aria-label="Scroll down" className="py-px"><Chevron d="down" /></button>
        </div>
      </div>
    </section>
  );
}

/* ---------- page ---------- */

export default function App() {
  const [view, setView] = useState('Perspective');
  return (
    <div className="flex h-screen flex-col overflow-hidden border-l border-l-[#1b8be0] bg-[#dfe3eb] font-['Liberation_Sans',Arial,sans-serif] text-[10px] text-[#111]">
      <div className="h-[2px] shrink-0 bg-[#0d4a94]" />

      <header className="shrink-0 bg-white font-['Open_Sans',sans-serif]">
        <div className="flex h-[25px] items-center gap-1 pl-[6px]">
          <svg viewBox="0 0 14 14" className="h-[14px] w-[14px]" fill="none">
            <rect width="14" height="14" fill="#1b1b1b" />
            <path d="M1 3l3 2l3-2l2 2l3-1l1 2l-3 2l-2 4H4l2-3l-3-1z" fill="#e8e8e8" />
            <path d="M4 6l3 1l2-1" stroke="#333" />
          </svg>
          <h1>Module 3 (329 KB) - Rhinoceros 5.0 Educational - [Perspective]</h1>
          <div className="ml-auto flex items-center gap-7 pr-3">
            <button aria-label="Minimize" className="w-[10px]"><svg viewBox="0 0 10 10" className="h-[10px] w-[10px]" stroke="#111"><path d="M0 5.500h9" /></svg></button>
            <button aria-label="Maximize" className="w-[10px]"><svg viewBox="0 0 10 10" className="h-[10px] w-[10px]" fill="none" stroke="#111"><path d="M0.500 0.500h8v8h-8z" /></svg></button>
            <button aria-label="Close" className="w-[10px]"><svg viewBox="0 0 10 10" className="h-[10px] w-[10px]" stroke="#111"><path d="M0.500 0.500l8 8M8.500 0.500l-8 8" /></svg></button>
          </div>
        </div>
        <nav className="flex h-[17px] items-center gap-[10px] pl-[6px]">
          {menus.map((m) => <button key={m}>{m}</button>)}
        </nav>
      </header>

      <section className="flex h-[43px] shrink-0 border-t border-[#c5cad4]">
        <VGrip />
        <div className="flex min-w-0 flex-1 flex-col border-b border-[#c5cad4] bg-white">
          <p className="h-[25px] border-b border-[#8e99ab] pt-[2px] leading-3">Select edges. Press Enter when done:</p>
          <label className="flex h-4 items-center whitespace-pre">
            <b>Point to move from</b>{' ( '}<u>D</u>irectionConstraint=<i>Vertical</i>{' ): '}
            <input aria-label="Command" defaultValue="v" className="min-w-0 flex-1 outline-none" />
          </label>
        </div>
        <div className="flex w-3 flex-col items-center justify-between bg-[#eceef2] py-px">
          <Chevron d="up" /><Chevron d="down" /><Chevron d="up" /><Chevron d="down" />
        </div>
      </section>

      <section className="mt-[5px] flex h-[48px] shrink-0">
        <VGrip />
        <div className="flex min-w-0 flex-1 flex-col">
          <div className="flex h-[13px] items-end border-b border-[#c3c9d6]">
            {toolTabs.map((t, i) => (
              <button key={t} className="-mb-px flex h-[13px]">
                <svg viewBox="0 0 9 13" className="h-[13px] w-[9px]" fill="none">
                  <path d="M0 13L5 3C6 1 7 0.500 9 0.500V13z" fill={i ? '#d7dcec' : '#fff'} />
                  <path d="M0 13L5 3C6 1 7 0.500 9 0.500" stroke="#a3abba" />
                </svg>
                <span className={`h-full border-t border-[#a3abba] leading-[14px] ${i ? 'bg-[#d7dcec]' : 'border-r bg-white'} ${i === toolTabs.length - 1 ? 'border-r pr-[6px]' : 'pr-[2px]'}`}>{t}</span>
              </button>
            ))}
            <div className="ml-auto"><Gear /></div>
          </div>
          <div className="flex-1 bg-linear-to-b from-[#fcfcfd] to-[#e0e3e9]">
            <div className="flex w-[755px]">
              {toolbar.map((t) => (
                <button key={t.name} aria-label={t.name} className="flex h-[26px] min-w-0 flex-1 items-center justify-center">
                  <Icon more={t.more}>{t.art}</Icon>
                </button>
              ))}
            </div>
          </div>
        </div>
      </section>

      <main className="mt-[2px] flex min-h-0 flex-1">
        <aside className="w-[54px] shrink-0 pt-[3px]">
          <div className="mr-1"><Grip /></div>
          <div className="grid h-[426px] w-[48px] auto-rows-fr grid-cols-2">
            {sideTools.map((t) => (
              <button key={t.name} aria-label={t.name} className="flex min-h-0 items-center justify-center">
                <Icon more={t.more}>{t.art}</Icon>
              </button>
            ))}
          </div>
        </aside>
        <div className="flex min-w-0 flex-1 flex-col">
          <div className="relative min-h-0 flex-1 overflow-hidden">
            <Scene />
            <button className="absolute top-0 left-0 flex h-4 items-center gap-1 bg-[#8ba7c7] pl-[7px] font-['Open_Sans',sans-serif]">
              Perspective
              <svg viewBox="0 0 9 14" className="h-[14px] w-[9px]"><path d="M1 1v12" stroke="#111" /><path d="M2.500 5.500h6L5.500 9z" fill="#111" /></svg>
            </button>
          </div>
          <div className="flex h-5 font-['Open_Sans',sans-serif]">
            {[...viewTabs, '+'].map((t) => {
              const on = t === view;
              return (
                <button key={t} onClick={() => t !== '+' && setView(t)} className="flex h-[19px]">
                  <svg viewBox="0 0 8 19" className="h-[19px] w-2" fill="none">
                    <path d="M0 0V9L7 18.500H8V0z" fill={on ? '#fff' : t === '+' ? '#e4e7ee' : '#d5dbee'} />
                    <path d="M0.500 9L7 18.500H8" stroke="#9ea7b5" />
                  </svg>
                  <span className={`grid h-full place-items-center rounded-br-sm border-r border-b border-[#9ea7b5] pr-1 ${on ? 'bg-white' : t === '+' ? 'bg-[#e4e7ee]' : 'bg-[#d5dbee]'}`}>
                    {t === '+' ? (
                      <svg viewBox="0 0 10 10" className="mr-1 ml-[2px] h-[10px] w-[10px]"><path d="M4 1h2v3h3v2H6v3H4V6H1V4h3z" fill="#fff" stroke="#555" /></svg>
                    ) : t}
                  </span>
                </button>
              );
            })}
          </div>
        </div>
        <div className="flex w-[242px] shrink-0 flex-col pt-[2px] pl-[7px]">
          <Grip />
          <div className="h-px" />
          <LayersPanel />
          <div className="mt-[3px] mb-1"><Grip /></div>
          <PropertiesPanel />
        </div>
      </main>

      <section className="flex h-[30px] shrink-0">
        <VGrip />
        <div className="flex items-center gap-1 pb-1 pl-[3px]">
          {snaps.map(([n, on, off]) => (
            <label key={n} className="flex items-center gap-[3px]">
              <span className="grid">
                <input type="checkbox" defaultChecked={on} disabled={off} className="peer col-start-1 row-start-1 h-[12px] w-[12px] appearance-none border border-[#333] bg-white disabled:border-[#bbb] disabled:bg-[#dcdcdc]" />
                <svg viewBox="0 0 12 12" className="pointer-events-none col-start-1 row-start-1 hidden h-[12px] w-[12px] peer-checked:block" fill="none"><path d="M2.500 6l2.500 2.500L9.500 3.500" stroke="#222" strokeWidth="1.200" /></svg>
              </span>
              {n}
            </label>
          ))}
        </div>
      </section>

      <footer className="flex h-4 shrink-0 items-stretch border-t border-[#9ea7b5] text-[11px] leading-[18px] [&>*]:border-r [&>*]:border-[#9ea7b5]">
        <button className="w-[48px]">CPlane</button>
        <span className="w-[74px] text-center">x -5'-10 3/4"</span>
        <span className="w-[74px] text-center">y -11"</span>
        <span className="w-[74px] text-center">z 0"</span>
        <span className="w-[74px] text-center">Feet</span>
        <button className="flex w-[146px] items-center gap-[2px] pl-[2px]"><span className="h-[11px] w-[11px] bg-black" />Massing</button>
        <button className="px-[7px]">Grid Snap</button>
        <button className="px-[6px]">Ortho</button>
        <button className="px-[6px]">Planar</button>
        <button className="bg-[#eef0f5] px-[5px] font-bold">Osnap</button>
        <button className="px-2">SmartTrack</button>
        <button className="px-2">Gumball</button>
        <button className="px-2">Record History</button>
        <button className="px-[6px]">Filter</button>
        <span className="flex-1 pl-[3px]">Absolute tolerance: 0.001</span>
        <span className="w-5" />
      </footer>
    </div>
  );
}
